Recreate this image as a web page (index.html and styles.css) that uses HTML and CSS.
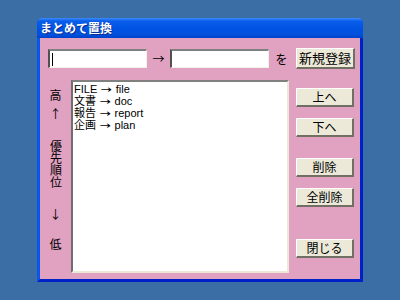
FILE: index.html
```html
<html>
<head>
    <meta http-equiv="Content-Type" content="text/html; charset=UTF-8"/>
    <title>まとめて置換</title>
    <link rel="stylesheet" href="styles.css">
</head>
<body>
<div class="window">
    <div class="title">まとめて置換</div>
    <div class="form">
        <div class="top">
            <div class="field"><span class="caret"></span></div>
            <span class="arrow">→</span>
            <div class="field"></div>
            <span class="wo">を</span>
            <div class="btn big">新規登録</div>
        </div>
        <div class="main">
            <div class="prio">
                <div class="hi">高</div>
                <div class="up">↑</div>
                <div class="words">優先順位</div>
                <div class="down">↓</div>
                <div class="lo">低</div>
            </div>
            <div class="list">
                <div class="row">FILE <span class="to">→</span> file</div>
                <div class="row">文書 <span class="to">→</span> doc</div>
                <div class="row">報告 <span class="to">→</span> report</div>
                <div class="row">企画 <span class="to">→</span> plan</div>
            </div>
            <div class="side">
                <div class="btn b-up">上へ</div>
                <div class="btn b-down">下へ</div>
                <div class="btn b-del">削除</div>
                <div class="btn b-all">全削除</div>
                <div class="btn b-close">閉じる</div>
            </div>
        </div>
    </div>
</div>
</body>
</html>
```

FILE: styles.css
```css
* {
    box-sizing: border-box;
}

html, body {
    margin: 0px;
    background: #3A6EA5;
    color: #000;
    font-family: "Noto Sans CJK JP", "Noto Sans", sans-serif;
    font-size: 12px;
}

body {
    padding: 18px 0 0 37px;
}

.window {
    width: 326px;
    height: 264px;
    display: flex;
    flex-direction: column;
    border-radius: 5px 5px 0 0;
    overflow: hidden;
}

.title {
    height: 20px;
    padding: 1px 0 0 3px;
    line-height: 18px;
    color: #fff;
    font-weight: bold;
    font-size: 12px;
    background: linear-gradient(#3C8CFC 0px, #0A5EEA 3px, #0054E3 10px, #0050DC 17px, #0040C8 20px);
    text-shadow: 1px 1px 0 #0A2C8C;
}

.form {
    flex: 1;
    background: #E0A2C0;
    border-left: 3px solid #0A56E6;
    border-right: 3px solid #0020C8;
    border-bottom: 3px solid #0020C8;
}

.top {
    display: flex;
    align-items: center;
    height: 21px;
    margin: 10px 0 0 8px;
}

.field {
    width: 99px;
    height: 19px;
    background: #fff;
    border-top: 2px solid #808080;
    border-left: 2px solid #505050;
    border-right: 1px solid #F4F2E8;
    border-bottom: 1px solid #F4F2E8;
    padding: 2px 0 0 2px;
}

.caret {
    display: block;
    width: 1px;
    height: 13px;
    background: #000;
}

.arrow {
    width: 23px;
    text-align: center;
}

.wo {
    width: 25px;
    text-align: center;
}

.btn {
    width: 58px;
    height: 19px;
    background: #ECE9D8;
    border-top: 1px solid #fff;
    border-left: 1px solid #fff;
    border-right: 2px solid #716F64;
    border-bottom: 2px solid #716F64;
    text-align: center;
    line-height: 16px;
    font-size: 12px;
}

.big {
    width: 59px;
    height: 21px;
    line-height: 18px;
    font-size: 13px;
    margin-left: 2px;
}

.main {
    display: flex;
    margin-top: 11px;
}

.prio {
    width: 31px;
    display: flex;
    flex-direction: column;
    align-items: center;
    line-height: 12px;
    padding-top: 9px;
}

.up {
    margin-top: 7px;
}

.words {
    writing-mode: vertical-rl;
    line-height: 14px;
    margin-top: 20px;
}

.down {
    margin-top: 20px;
}

.lo {
    margin-top: 18px;
}

.list {
    width: 218px;
    height: 193px;
    background: #fff;
    border-top: 2px solid #808080;
    border-left: 2px solid #6E6E6E;
    border-right: 2px solid #ECE9D8;
    border-bottom: 2px solid #ECE9D8;
    padding: 1px 0 0 1px;
}

.row {
    height: 12px;
    line-height: 12px;
    font-family: "Liberation Sans", "Noto Sans CJK JP", sans-serif;
    font-size: 11px;
}

.to {
    display: inline-block;
    font-family: "DejaVu Sans", sans-serif;
    font-size: 10px;
    line-height: 12px;
    transform: scaleX(1.35);
    margin: 0 2px;
}

.side {
    margin-left: 7px;
    padding-top: 8px;
}

.b-down {
    margin-top: 11px;
}

.b-del {
    margin-top: 21px;
}

.b-all {
    margin-top: 11px;
}

.b-close {
    margin-top: 32px;
}
```
